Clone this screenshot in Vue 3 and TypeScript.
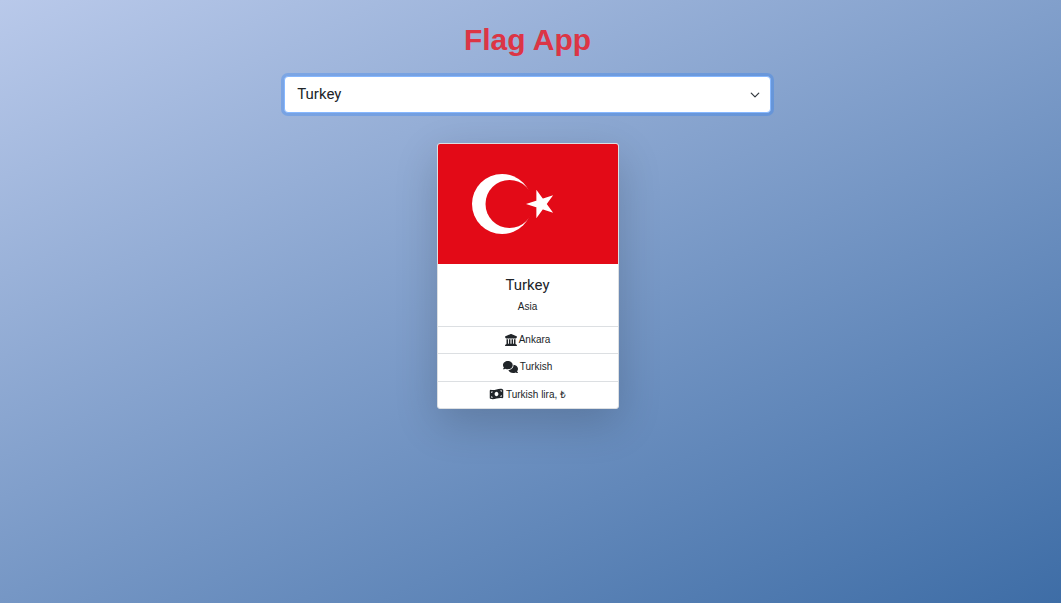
<script setup lang="ts">
import { ref, computed } from 'vue'

interface Country {
  name: string
  region: string
  capital: string
  language: string
  currency: string
}

const countries: Country[] = [
  { name: 'Turkey', region: 'Asia', capital: 'Ankara', language: 'Turkish', currency: 'Turkish lira, ₺' },
]

const selected = ref('Turkey')
const country = computed(() => countries.find((c) => c.name === selected.value) ?? countries[0])
</script>

<template>
  <main class="page">
    <h1 class="title">Flag App</h1>
    <select v-model="selected" class="picker" aria-label="Country">
      <option v-for="c in countries" :key="c.name" :value="c.name">{{ c.name }}</option>
    </select>
    <article class="card">
      <svg class="flag" viewBox="0 -30000 90000 60000" role="img" :aria-label="`Flag of ${country.name}`">
        <path fill="#e30a17" d="M0-30000h90000v60000H0z" />
        <circle cx="32000" cy="0" r="15000" fill="#fff" />
        <circle cx="35750" cy="0" r="12000" fill="#e30a17" />
        <path fill="#fff" d="M44000 0l13568 4408-8386-11541v14266l8386-11541z" />
      </svg>
      <div class="card-body">
        <h2 class="name">{{ country.name }}</h2>
        <p class="region">{{ country.region }}</p>
      </div>
      <ul class="facts">
        <li>
          <svg class="icon" viewBox="0 0 512 512" aria-hidden="true">
            <path d="M243.4 2.6l-224 96c-14 6-21.8 21-18.7 35.8S16.8 160 32 160v8c0 13.3 10.7 24 24 24h400c13.3 0 24-10.700 24-24v-8c15.200 0 28.300-10.700 31.300-25.600s-4.800-29.900-18.700-35.800l-224-96c-8-3.400-17.200-3.400-25.200 0zM128 224H64v196.300c-.6.300-1.200.7-1.800 1.100l-48 32c-11.700 7.800-17 22.400-12.900 35.900S17.900 512 32 512h448c14.100 0 26.500-9.200 30.600-22.700s-1.100-28.100-12.900-35.900l-48-32c-.6-.4-1.200-.7-1.800-1.100V224h-64v192h-40V224h-64v192h-48V224h-64v192h-40V224z" />
          </svg>
          {{ country.capital }}
        </li>
        <li>
          <svg class="icon wide" viewBox="0 0 640 512" aria-hidden="true">
            <path d="M208 352c114.900 0 208-78.800 208-176S322.900 0 208 0 0 78.800 0 176c0 38.600 14.700 74.300 39.600 103.400-3.500 9.400-8.700 17.700-14.200 24.700-4.800 6.200-9.700 11-13.300 14.300-1.800 1.600-3.300 2.900-4.300 3.700-.5.4-.9.7-1.100.8C1 327.200-1.400 334.400.8 340.900S9.100 352 16 352c21.800 0 43.800-5.600 62.100-12.500 9.200-3.500 17.800-7.400 25.300-11.400C134.100 343.300 169.800 352 208 352zM448 176c0 112.300-99.100 196.900-216.500 207C255.800 457.400 336.400 512 432 512c38.200 0 73.900-8.700 104.700-23.900 7.500 4 16 7.900 25.200 11.400 18.300 6.900 40.300 12.500 62.100 12.500 6.900 0 13.100-4.500 15.200-11.100 2.100-6.600-.2-13.800-5.800-17.900-.2-.2-.6-.4-1.100-.8-1-.8-2.500-2-4.300-3.700-3.600-3.300-8.500-8.100-13.300-14.300-5.500-7-10.700-15.400-14.200-24.700 24.900-29 39.600-64.700 39.600-103.400 0-92.800-84.900-168.900-192.600-175.500.4 5.100.6 10.300.6 15.500z" />
          </svg>
          {{ country.language }}
        </li>
        <li>
          <svg class="icon wide" viewBox="0 0 576 512" aria-hidden="true">
            <path fill-rule="evenodd" d="M0 112.500V422c0 18 10.100 35 27 41.300 87 32.500 174 10.300 261-11.900 79.800-20.300 159.600-40.700 239.300-18.900 23 6.300 48.700-9.500 48.700-33.400V90c0-18-10.100-35-27-41.300-87-32.500-174-10.300-261 11.900-79.800 20.300-159.600 40.700-239.300 18.900C25.600 73.200 0 88.900 0 112.500zM288 352c-44.200 0-80-43-80-96s35.800-96 80-96 80 43 80 96-35.800 96-80 96zM64 352c35.300 0 64 28.700 64 64H64zM64 208v-64h64c0 35.300-28.700 64-64 64zM512 304v64h-64c0-35.300 28.700-64 64-64zM448 96h64v64c-35.300 0-64-28.700-64-64z" />
          </svg>
          {{ country.currency }}
        </li>
      </ul>
    </article>
  </main>
</template>

<style>
body {
  margin: 0;
}
</style>

<style scoped>
.page {
  box-sizing: border-box;
  min-height: 100vh;
  padding: 22px 6px 24px 0;
  display: flex;
  flex-direction: column;
  align-items: center;
  font-family: "Liberation Sans", Arial, sans-serif;
  color: #212529;
  background: linear-gradient(155deg, #b9c9ea, #3e6da6);
}

.title {
  margin: 0 0 18px;
  font-size: 30px;
  line-height: 36px;
  color: #dc3545;
}

.picker {
  box-sizing: border-box;
  width: 46.1%;
  height: 37px;
  padding: 0 34px 2px 12px;
  border: 1px solid #86b7fe;
  border-radius: 4px;
  outline: 0;
  box-shadow: 0 0 0 3px rgba(13, 110, 253, 0.25);
  appearance: none;
  font-family: Roboto, "Liberation Sans", sans-serif;
  font-size: 15px;
  color: #212529;
  background: #fff url("data:image/svg+xml,%3Csvg xmlns='http://www.w3.org/2000/svg' viewBox='0 0 16 16'%3E%3Cpath fill='none' stroke='%23343a40' stroke-linecap='round' stroke-linejoin='round' stroke-width='2' d='m2 5 6 6 6-6'/%3E%3C/svg%3E") no-repeat right 10px center / 10px 10px;
}

.card {
  box-sizing: border-box;
  width: 182px;
  margin-top: 30px;
  overflow: hidden;
  border: 1px solid #dcdfe2;
  border-radius: 3px;
  background: #fff;
  box-shadow: 0 14px 43px rgba(0, 0, 0, 0.175);
  text-align: center;
}

.flag {
  display: block;
  width: 100%;
}

.card-body {
  padding: 12px 12px 11px;
}

.name {
  margin: 0 0 5px;
  font-family: Roboto, "Liberation Sans", sans-serif;
  font-size: 15px;
  font-weight: 400;
  line-height: 18px;
}

.region {
  margin: 0;
  font-size: 10px;
  line-height: 16px;
}

.facts {
  display: grid;
  grid-auto-rows: 1fr;
  min-height: 82px;
  margin: 0;
  padding: 0;
  list-style: none;
  font-size: 10px;
}

.facts li {
  display: flex;
  align-items: center;
  justify-content: center;
  gap: 2px;
  padding-bottom: 1px;
  border-top: 1px solid #dcdfe2;
}

.icon {
  width: 12px;
  height: 12px;
  fill: #212529;
}

.wide {
  width: 15px;
}
</style>
